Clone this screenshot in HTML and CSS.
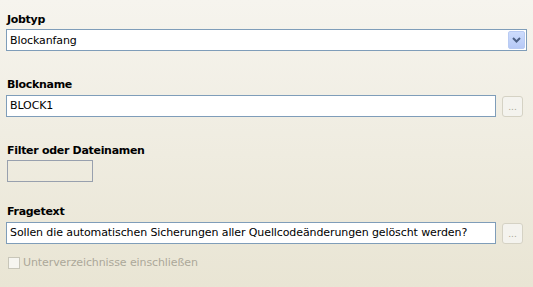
FILE: index.html
```html
<!DOCTYPE html>
<html lang="de">
<head>
  <meta charset="UTF-8" />
  <title>Job</title>
  <link rel="stylesheet" href="styles.css">
</head>
<body>
<div class="form">
  <div class="field">
    <label class="caption">Jobtyp</label>
    <div class="select">
      <span class="select-value">Blockanfang</span>
      <span class="select-arrow">
        <svg width="9" height="6" viewBox="0 0 9 6"><path d="M1 1 L4.5 4.5 L8 1" fill="none" stroke="#4d6185" stroke-width="2"/></svg>
      </span>
    </div>
  </div>

  <div class="field">
    <label class="caption">Blockname</label>
    <div class="row">
      <div class="textbox">BLOCK1</div>
      <button class="dots" disabled>...</button>
    </div>
  </div>

  <div class="field field-filter">
    <label class="caption">Filter oder Dateinamen</label>
    <div class="textbox small"></div>
  </div>

  <div class="field field-last">
    <label class="caption">Fragetext</label>
    <div class="row">
      <div class="textbox">Sollen die automatischen Sicherungen aller Quellcodeänderungen gelöscht werden?</div>
      <button class="dots" disabled>...</button>
    </div>
  </div>

  <div class="check">
    <span class="box"></span>
    <span>Unterverzeichnisse einschließen</span>
  </div>
</div>
</body>
</html>
```

FILE: styles.css
```css
* {
  box-sizing: border-box;
  margin: 0;
  padding: 0;
}

html, body {
  height: 100%;
}

body {
  font-family: 'DejaVu Sans', sans-serif;
  font-size: 11px;
  letter-spacing: -0.1px;
  color: #000;
  background: linear-gradient(#f6f4ee, #e9e5d4);
}

.form {
  padding: 13px 6px 0 6px;
}

.field {
  margin-bottom: 27px;
}

.field-filter {
  margin-bottom: 23px;
}

.field-last {
  margin-bottom: 12px;
}

.caption {
  display: block;
  font-weight: bold;
  letter-spacing: -0.3px;
  line-height: 13px;
  margin: 0 0 3px 1px;
}

.select {
  display: flex;
  align-items: center;
  height: 22px;
  width: 521px;
  background: #fff;
  border: 1px solid #7f9db9;
  padding: 0 1px 0 3px;
}

.select-value {
  flex: 1;
}

.select-arrow {
  width: 17px;
  height: 18px;
  background: linear-gradient(#cddcfc, #b6c9f6);
  border: 1px solid #b9cbf3;
  border-radius: 2px;
  display: flex;
  align-items: center;
  justify-content: center;
}

.row {
  display: flex;
  align-items: center;
  gap: 6px;
}

.textbox {
  width: 490px;
  height: 22px;
  line-height: 20px;
  background: #fff;
  border: 1px solid #7f9db9;
  padding: 0 3px;
  white-space: nowrap;
  overflow: hidden;
}

.textbox.small {
  width: 86px;
  margin-left: 1px;
  background: transparent;
  border-color: #98a0ae;
}

.dots {
  width: 21px;
  height: 21px;
  margin-top: 2px;
  border: 1px solid #d5d2c4;
  border-radius: 3px;
  background: #f4f3ee;
  color: #a9a692;
  font-family: inherit;
  font-size: 9px;
  line-height: 14px;
}

.check {
  display: flex;
  align-items: center;
  gap: 3px;
  margin-left: 2px;
  color: #aca899;
}

.check .box {
  width: 12px;
  height: 12px;
  border: 1px solid #c8c6b9;
  background: #f6f5f0;
}
```
